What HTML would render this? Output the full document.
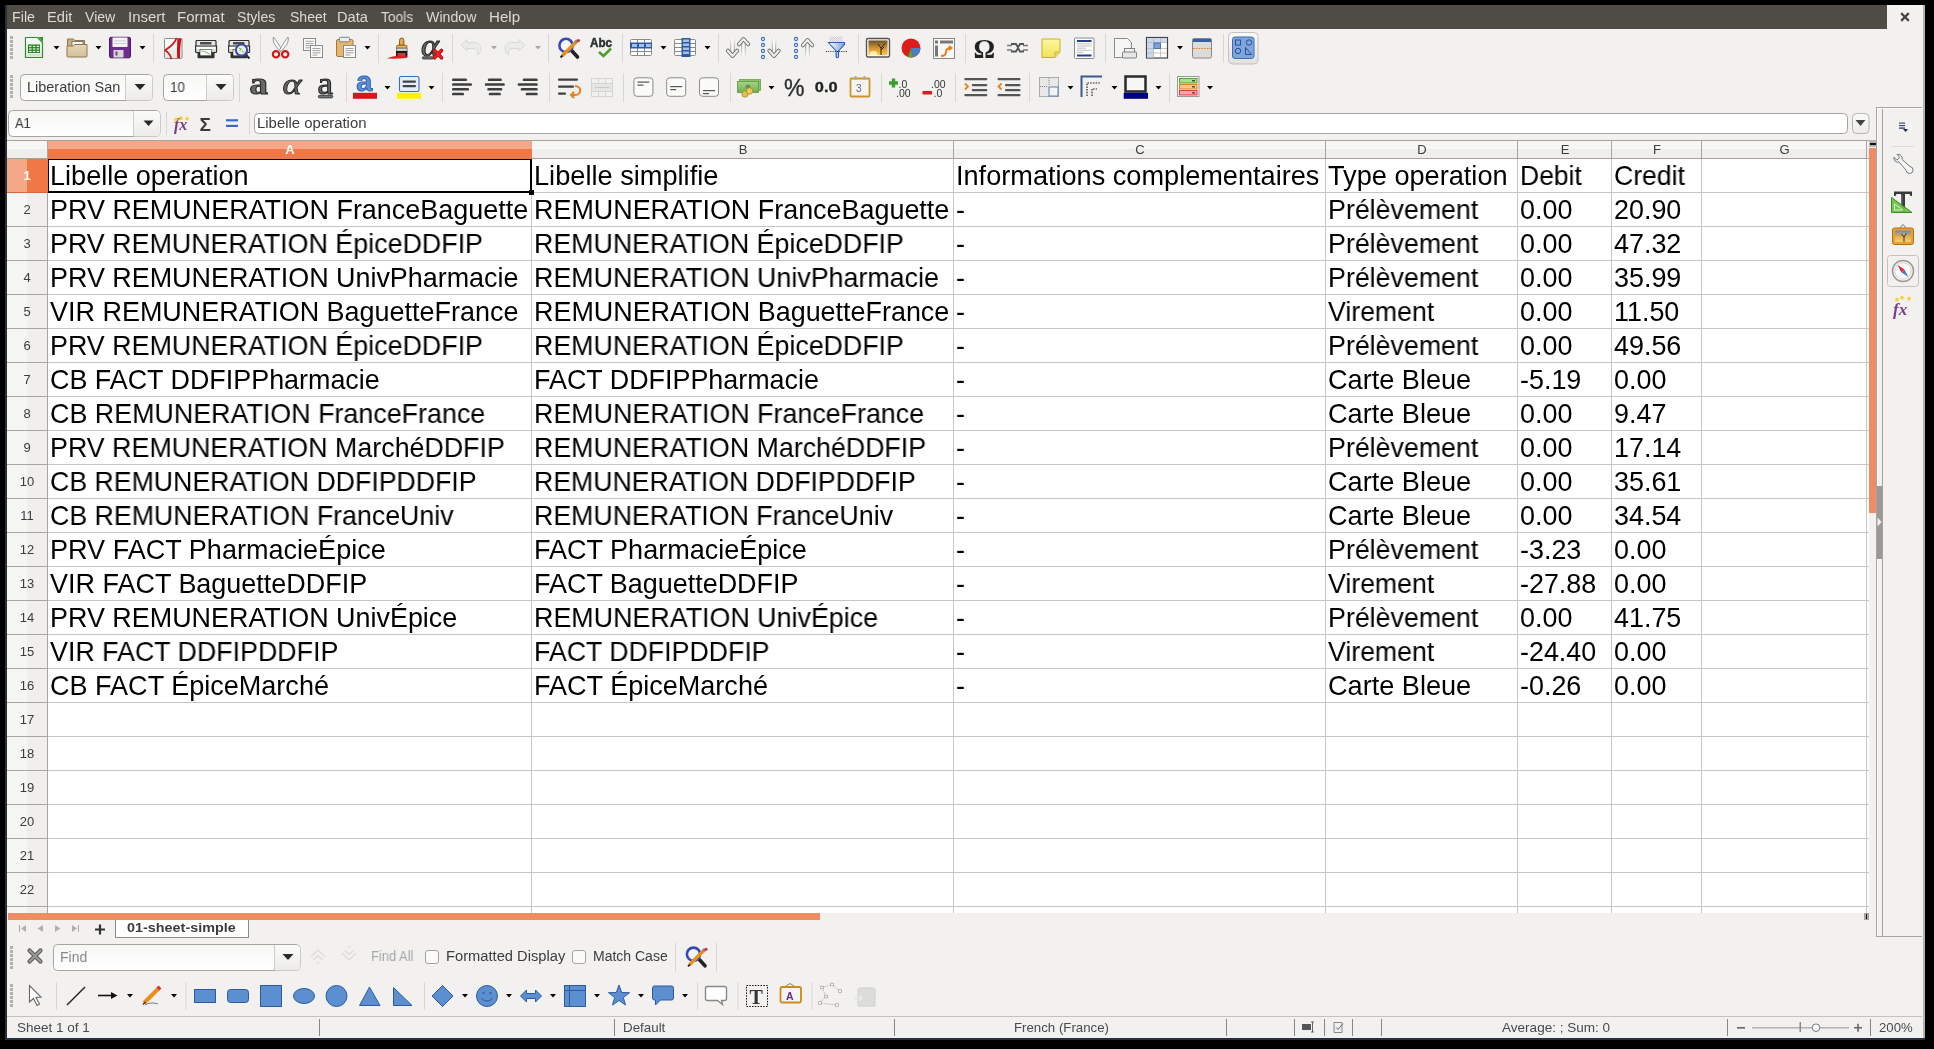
<!DOCTYPE html>
<html><head><meta charset="utf-8"><style>
html,body{margin:0;padding:0;width:1934px;height:1049px;overflow:hidden;background:#000}
body{position:relative;font-family:"Liberation Sans",sans-serif}
body>div,body>svg{position:absolute;box-sizing:border-box}
.t{will-change:transform}
</style></head><body>
<div style="left:0px;top:0px;width:1934px;height:1049px;background:#000"></div><div style="left:5px;top:5px;width:1920px;height:1035px;background:#27303f"></div><div style="left:7px;top:5px;width:1918px;height:1033px;background:#f2f1f0"></div><div style="left:1923px;top:5px;width:2px;height:1033px;background:#b4b2ae"></div><div style="left:7px;top:5px;width:1880px;height:24px;background:#4f4b45"></div><div class="t" style="left:12.28px;top:10.25px;font-size:14px;line-height:14px;color:#dfdbd2;white-space:pre;transform:scaleX(1.0196);transform-origin:left top;">File</div><div class="t" style="left:47.45px;top:10.25px;font-size:14px;line-height:14px;color:#dfdbd2;white-space:pre;transform:scaleX(1.0459);transform-origin:left top;">Edit</div><div class="t" style="left:85.10px;top:10.25px;font-size:14px;line-height:14px;color:#dfdbd2;white-space:pre;transform:scaleX(1.0071);transform-origin:left top;">View</div><div class="t" style="left:128.23px;top:10.25px;font-size:14px;line-height:14px;color:#dfdbd2;white-space:pre;transform:scaleX(1.0696);transform-origin:left top;">Insert</div><div class="t" style="left:177.33px;top:10.25px;font-size:14px;line-height:14px;color:#dfdbd2;white-space:pre;transform:scaleX(1.0748);transform-origin:left top;">Format</div><div class="t" style="left:237.40px;top:10.25px;font-size:14px;line-height:14px;color:#dfdbd2;white-space:pre;transform:scaleX(1.0072);transform-origin:left top;">Styles</div><div class="t" style="left:289.50px;top:10.25px;font-size:14px;line-height:14px;color:#dfdbd2;white-space:pre;transform:scaleX(1.0001);transform-origin:left top;">Sheet</div><div class="t" style="left:337.46px;top:10.25px;font-size:14px;line-height:14px;color:#dfdbd2;white-space:pre;transform:scaleX(1.0422);transform-origin:left top;">Data</div><div class="t" style="left:381.20px;top:10.25px;font-size:14px;line-height:14px;color:#dfdbd2;white-space:pre;transform:scaleX(0.9822);transform-origin:left top;">Tools</div><div class="t" style="left:426.00px;top:10.25px;font-size:14px;line-height:14px;color:#dfdbd2;white-space:pre;transform:scaleX(1.0122);transform-origin:left top;">Window</div><div class="t" style="left:488.92px;top:10.25px;font-size:14px;line-height:14px;color:#dfdbd2;white-space:pre;transform:scaleX(1.0783);transform-origin:left top;">Help</div><svg style="left:1897px;top:9px" width="16" height="16" viewBox="0 0 16 16"><path d="M5 5 L11 11 M11 5 L5 11" stroke="#444" stroke-width="2.3" stroke-linecap="square"/></svg><svg style="left:0;top:0" width="1934" height="1049" viewBox="0 0 1934 1049"><defs>
<linearGradient id="gpage" x1="0" y1="0" x2="0" y2="1"><stop offset="0" stop-color="#fff"/><stop offset="1" stop-color="#e4e4e2"/></linearGradient>
<linearGradient id="gfold" x1="0" y1="0" x2="0" y2="1"><stop offset="0" stop-color="#e6d6b6"/><stop offset="1" stop-color="#d4c09a"/></linearGradient>
<linearGradient id="gbtn" x1="0" y1="0" x2="0" y2="1"><stop offset="0" stop-color="#fbfbfa"/><stop offset="1" stop-color="#ecebe9"/></linearGradient>
<linearGradient id="gbox" x1="0" y1="0" x2="0" y2="1"><stop offset="0" stop-color="#f6f6f5"/><stop offset="1" stop-color="#ffffff"/></linearGradient>
<linearGradient id="gsun" x1="0" y1="0" x2="0" y2="1"><stop offset="0" stop-color="#6b4f2a"/><stop offset="0.6" stop-color="#e0a030"/><stop offset="1" stop-color="#f7c552"/></linearGradient>
<linearGradient id="gprint" x1="0" y1="0" x2="0" y2="1"><stop offset="0" stop-color="#8a8a88"/><stop offset="0.5" stop-color="#e8e8e6"/><stop offset="1" stop-color="#3a3a3a"/></linearGradient>
<linearGradient id="gfunnel" x1="0" y1="0" x2="1" y2="0"><stop offset="0" stop-color="#ffffff"/><stop offset="1" stop-color="#7aa3d6"/></linearGradient>
<linearGradient id="gyel" x1="0" y1="0" x2="0" y2="1"><stop offset="0" stop-color="#fdf6a0"/><stop offset="1" stop-color="#f1e25a"/></linearGradient>
<linearGradient id="gsel" x1="0" y1="0" x2="0" y2="1"><stop offset="0" stop-color="#fbfbfa"/><stop offset="1" stop-color="#e2e1de"/></linearGradient>
<linearGradient id="gcash" x1="0" y1="0" x2="0" y2="1"><stop offset="0" stop-color="#a6d58a"/><stop offset="1" stop-color="#6fae52"/></linearGradient>
<linearGradient id="gsky" x1="0" y1="0" x2="0" y2="1"><stop offset="0" stop-color="#6a8ab8"/><stop offset="0.55" stop-color="#e8b050"/><stop offset="1" stop-color="#f8d070"/></linearGradient></defs><rect x="10" y="36" width="3" height="3" fill="#b3b1ac"/><rect x="10" y="40" width="3" height="3" fill="#b3b1ac"/><rect x="10" y="44" width="3" height="3" fill="#b3b1ac"/><rect x="10" y="48" width="3" height="3" fill="#b3b1ac"/><rect x="10" y="52" width="3" height="3" fill="#b3b1ac"/><rect x="10" y="56" width="3" height="3" fill="#b3b1ac"/><path d="M25.5 37.5 H37.5 L42.5 42.5 V57.5 H25.5 Z" fill="url(#gpage)" stroke="#2f8f26" stroke-width="1.2"/><path d="M38 37 H43 V42 Z" fill="#2a9a22"/><rect x="28" y="44.5" width="12" height="8.5" fill="#1f801b"/><rect x="29.0" y="45.8" width="2.6" height="1.3" fill="#e8f4e4"/><rect x="32.8" y="45.8" width="2.6" height="1.3" fill="#e8f4e4"/><rect x="36.6" y="45.8" width="2.6" height="1.3" fill="#e8f4e4"/><rect x="29.0" y="48.3" width="2.6" height="1.3" fill="#e8f4e4"/><rect x="32.8" y="48.3" width="2.6" height="1.3" fill="#e8f4e4"/><rect x="36.6" y="48.3" width="2.6" height="1.3" fill="#e8f4e4"/><rect x="29.0" y="50.8" width="2.6" height="1.3" fill="#e8f4e4"/><rect x="32.8" y="50.8" width="2.6" height="1.3" fill="#e8f4e4"/><rect x="36.6" y="50.8" width="2.6" height="1.3" fill="#e8f4e4"/><rect x="28" y="54.5" width="12" height="0.8" fill="#c8c8c8"/><path d="M53.5 46 h6 l-3 3.5 z" fill="#000"/><path d="M67.5 39 h6 l1.5 1.5 h9.5 v8 h-17 z" fill="#c4ae84" stroke="#8f7650" stroke-width="1"/><rect x="72" y="41.5" width="11" height="6" fill="#fff" stroke="#666" stroke-width="0.8"/><path d="M67 46 h6 l1.5 -1.5 h12.5 v11.5 a1 1 0 0 1 -1 1 h-18 a1 1 0 0 1 -1 -1 z" fill="url(#gfold)" stroke="#8f7650" stroke-width="1"/><path d="M95.5 46 h6 l-3 3.5 z" fill="#000"/><rect x="109.5" y="37.3" width="21" height="20.5" rx="1.5" fill="#6e2c8e" stroke="#4c1766" stroke-width="1"/><rect x="112.5" y="37.5" width="15" height="9.5" fill="#f4f4f2"/><rect x="114" y="40.5" width="12" height="0.7" fill="#b8c0b0"/><rect x="114" y="43.3" width="12" height="0.7" fill="#b8c0b0"/><rect x="113.5" y="50" width="10" height="7.5" fill="#d8d8d4"/><rect x="115.5" y="51.5" width="2" height="4" fill="#7a3a9a"/><path d="M139.5 46 h6 l-3 3.5 z" fill="#000"/><rect x="153" y="34" width="1" height="29" fill="#d9d7d3"/><rect x="164.5" y="38.5" width="17.5" height="20" rx="0.8" fill="url(#gpage)" stroke="#8a8a8a" stroke-width="1"/><path d="M176.3 38.6 C174.5 43.5 170 47 165.8 49.8 L165.3 50.6 C168.5 52.5 170.2 55 171.3 58.4" fill="none" stroke="#cc1a1a" stroke-width="1.7" stroke-linecap="round"/><path d="M177.4 38.6 L181.6 38.4 C180.6 43 179.9 50 180 58.3 L177.2 58.3 C176.9 51 177 44 177.4 38.6 Z" fill="#cc1414"/><path d="M196.5 40.5 h19 l0.5 1 v5 h-20 v-5 z" fill="#e6e6e4" stroke="#2e2e2e" stroke-width="1.2"/><rect x="200" y="42" width="11.5" height="2.6" rx="0.6" fill="#4a4a4a"/><path d="M195.6 46 h21 v5.5 a1 1 0 0 1 -1 1 h-19 a1 1 0 0 1 -1 -1 z" fill="#d8d8d6" stroke="#2a2a2a" stroke-width="1.1"/><rect x="196.5" y="47" width="19" height="2" fill="#fafafa"/><path d="M197.5 52 h17 v5.2 a1 1 0 0 1 -1 1 h-15 a1 1 0 0 1 -1 -1 z" fill="#333" /><rect x="200" y="49.3" width="11.5" height="6.5" fill="#fbfbfb" stroke="#111" stroke-width="0.5"/><path d="M201.5 51 l3 0.5 l3 1.5 l2.5 1.5" stroke="#8ccc6a" stroke-width="1.2" fill="none"/><path d="M229.5 40.5 h19 l0.5 1 v5 h-20 v-5 z" fill="#e6e6e4" stroke="#2e2e2e" stroke-width="1.2"/><rect x="233" y="42" width="11.5" height="2.6" rx="0.6" fill="#4a4a4a"/><path d="M228.6 46 h21 v5.5 a1 1 0 0 1 -1 1 h-19 a1 1 0 0 1 -1 -1 z" fill="#d8d8d6" stroke="#2a2a2a" stroke-width="1.1"/><rect x="229.5" y="47" width="19" height="2" fill="#fafafa"/><path d="M230.5 52 h17 v5.2 a1 1 0 0 1 -1 1 h-15 a1 1 0 0 1 -1 -1 z" fill="#333" /><rect x="233" y="49.3" width="11.5" height="6.5" fill="#fbfbfb" stroke="#111" stroke-width="0.5"/><path d="M234.5 51 l3 0.5 l3 1.5 l2.5 1.5" stroke="#8ccc6a" stroke-width="1.2" fill="none"/><line x1="245" y1="54" x2="249.5" y2="58.5" stroke="#333" stroke-width="2.2"/><circle cx="241.5" cy="50" r="5.6" fill="#eaf2e6" stroke="#3848b0" stroke-width="2"/><path d="M239 48 l2 1 l-1 2 M242 51 l2 1.5" stroke="#8ccc6a" stroke-width="1.5" fill="none"/><rect x="260" y="34" width="1" height="29" fill="#d9d7d3"/><path d="M273.5 37 C272 42 276 47 280.5 51.5 L282 50 C279 45 276 40 273.5 37 Z" fill="#f8f8f8" stroke="#8a8a8a" stroke-width="0.9"/><path d="M288 37 C289.5 42 285.5 47 281 51.5 L279.5 50 C282.5 45 285.5 40 288 37 Z" fill="#f8f8f8" stroke="#8a8a8a" stroke-width="0.9"/><circle cx="276" cy="54.3" r="3.2" fill="none" stroke="#d01818" stroke-width="2.1"/><circle cx="285.2" cy="54.3" r="3.2" fill="none" stroke="#d01818" stroke-width="2.1"/><rect x="303.5" y="38.5" width="12" height="12" fill="#fafafa" stroke="#8a8a88" stroke-width="1"/><rect x="305.5" y="40.8" width="8" height="0.9" fill="#999"/><rect x="305.5" y="43.0" width="8" height="0.9" fill="#999"/><rect x="305.5" y="45.2" width="8" height="0.9" fill="#999"/><rect x="305.5" y="47.4" width="5" height="0.9" fill="#999"/><rect x="310.5" y="45.5" width="12" height="12" fill="#fafafa" stroke="#8a8a88" stroke-width="1"/><rect x="312.5" y="48.0" width="8" height="0.9" fill="#999"/><rect x="312.5" y="50.2" width="8" height="0.9" fill="#999"/><rect x="312.5" y="52.4" width="8" height="0.9" fill="#999"/><rect x="312.5" y="54.6" width="5" height="0.9" fill="#999"/><rect x="336.5" y="39.5" width="16.5" height="17" rx="1.5" fill="#e6b670" stroke="#a87830" stroke-width="1"/><rect x="339.5" y="37.3" width="10" height="4.5" rx="1" fill="#eee" stroke="#777" stroke-width="0.9"/><rect x="343.5" y="45.5" width="12" height="12" fill="#fafafa" stroke="#8a8a88" stroke-width="1"/><rect x="345.5" y="48.0" width="8" height="0.9" fill="#999"/><rect x="345.5" y="50.2" width="8" height="0.9" fill="#999"/><rect x="345.5" y="52.4" width="8" height="0.9" fill="#999"/><rect x="345.5" y="54.6" width="5" height="0.9" fill="#999"/><path d="M364.5 46 h6 l-3 3.5 z" fill="#000"/><rect x="378" y="34" width="1" height="29" fill="#d9d7d3"/><path d="M399.5 45.2 V40.5 a2.2 2.5 0 0 1 4.4 0 V45.2 z" fill="#e0aa50" stroke="#8a5a10" stroke-width="1"/><rect x="396.5" y="45.3" width="10.5" height="2.9" rx="1.2" fill="#e8b860" stroke="#8a5a10" stroke-width="0.9"/><rect x="396.3" y="48.2" width="10.9" height="2.9" fill="#dcdcd6" stroke="#555" stroke-width="0.6"/><rect x="396" y="51" width="11.4" height="6.3" fill="#1a1a1a"/><path d="M397.5 53 h8 v4 h-8 z" fill="#c83838"/><path d="M387 58.5 C391 56.5 395 56 398 55.5 L407 56.5 L406.5 58 C400 58.6 393 58.8 387 58.5 Z" fill="#e01c1c"/><text x="421" y="55.5" font-family="Liberation Serif" font-style="italic" font-size="31" fill="#6a6a68" stroke="#2a2a2a" stroke-width="1" textLength="18" lengthAdjust="spacingAndGlyphs">α</text><rect x="422.3" y="56.8" width="11" height="2.2" rx="1.1" fill="#777" stroke="#2a2a2a" stroke-width="0.8"/><path d="M434.5 50.5 L441.5 57.8 M441.5 50.5 L434.5 57.8" stroke="#a00" stroke-width="3.6" stroke-linecap="round"/><path d="M434.5 50.5 L441.5 57.8 M441.5 50.5 L434.5 57.8" stroke="#f02020" stroke-width="2.2" stroke-linecap="round"/><rect x="452" y="34" width="1" height="29" fill="#d9d7d3"/><path d="M461 45 L467 39.5 V42.5 H474 C479 42.5 481 45.5 481 49 C481 52.5 479 54.5 477 55 C478.5 53 478 48.5 474 48.5 H467 V51 Z" fill="#ebebea" stroke="#d8d8d6" stroke-width="1"/><path d="M491 46 h6 l-3 3.5 z" fill="#a8a8a6"/><path d="M525 45 L519 39.5 V42.5 H512 C507 42.5 505 45.5 505 49 C505 52.5 507 54.5 509 55 C507.5 53 508 48.5 512 48.5 H519 V51 Z" fill="#ebebea" stroke="#d8d8d6" stroke-width="1"/><path d="M535 46 h6 l-3 3.5 z" fill="#a8a8a6"/><rect x="548" y="34" width="1" height="29" fill="#d9d7d3"/><line x1="572" y1="51" x2="577.5" y2="57" stroke="#222" stroke-width="3.6" stroke-linecap="round"/><circle cx="566" cy="45.4" r="6.6" fill="#f6f6f6" stroke="#3848b8" stroke-width="2.6"/><path d="M562 56 L576 42" stroke="#e8901a" stroke-width="3.4"/><path d="M575.5 42.5 L577.5 40.5" stroke="#888" stroke-width="3.4"/><circle cx="578.5" cy="40.5" r="1.5" fill="#e02828"/><path d="M560.5 57.5 L562.5 55.5" stroke="#222" stroke-width="1.8"/><text x="590" y="47" font-family="Liberation Sans" font-weight="bold" font-size="13" fill="#2a2e30" stroke="#2a2e30" stroke-width="0.5" textLength="22" lengthAdjust="spacingAndGlyphs">Abc</text><path d="M599 52 L603.5 56 L611 48.5" fill="none" stroke="#4ca02a" stroke-width="2.6"/><rect x="622" y="34" width="1" height="29" fill="#d9d7d3"/><rect x="630.5" y="39.5" width="21" height="16" rx="1" fill="#fff" stroke="#8a8a8a" stroke-width="1"/><path d="M637.5 39.5 v16 M644.5 39.5 v16 M630.5 46 h21 M630.5 51.5 h21" stroke="#8a8a8a" stroke-width="1"/><rect x="630" y="42.5" width="22" height="6" fill="#2a5ba8"/><rect x="632" y="44" width="5" height="3" fill="#a8c0e0"/><rect x="639" y="44" width="5" height="3" fill="#a8c0e0"/><rect x="646" y="44" width="5" height="3" fill="#a8c0e0"/><path d="M660.5 46 h6 l-3 3.5 z" fill="#000"/><rect x="674.5" y="39.5" width="21" height="16" rx="1" fill="#fff" stroke="#8a8a8a" stroke-width="1"/><path d="M674.5 43.5 h21 M674.5 47.5 h21 M674.5 51.5 h21" stroke="#8a8a8a" stroke-width="1"/><rect x="681.5" y="38" width="9" height="19" fill="#2a5ba8"/><rect x="683" y="39.5" width="6" height="2.5" fill="#a8c0e0"/><rect x="683" y="43.5" width="6" height="2.5" fill="#a8c0e0"/><rect x="683" y="47.5" width="6" height="2.5" fill="#a8c0e0"/><rect x="683" y="51.5" width="6" height="2.5" fill="#a8c0e0"/><path d="M704.5 46 h6 l-3 3.5 z" fill="#000"/><rect x="718" y="34" width="1" height="29" fill="#d9d7d3"/><linearGradient id="gstemd" x1="0" y1="0" x2="0" y2="1"><stop offset="0" stop-color="#888" stop-opacity="0.1"/><stop offset="1" stop-color="#777" stop-opacity="1"/></linearGradient><linearGradient id="gstemu" x1="0" y1="1" x2="0" y2="0"><stop offset="0" stop-color="#888" stop-opacity="0.1"/><stop offset="1" stop-color="#777" stop-opacity="1"/></linearGradient><rect x="730.3" y="38" width="4.4" height="14.700000000000003" fill="#f8f8f6"/><rect x="730.3" y="38" width="0.9" height="14.700000000000003" fill="url(#gstemd)"/><rect x="733.8" y="38" width="0.9" height="14.700000000000003" fill="url(#gstemd)"/><path d="M727.9 50.7 L732.5 56.0 L737.1 50.7" fill="none" stroke="#6a6a68" stroke-width="4" stroke-linejoin="round" stroke-linecap="round"/><path d="M727.9 50.7 L732.5 56.0 L737.1 50.7" fill="none" stroke="#eeeeec" stroke-width="2.2" stroke-linejoin="round" stroke-linecap="round"/><rect x="741.3" y="42.3" width="4.4" height="14.700000000000003" fill="#f8f8f6"/><rect x="741.3" y="42.3" width="0.9" height="14.700000000000003" fill="url(#gstemu)"/><rect x="744.8" y="42.3" width="0.9" height="14.700000000000003" fill="url(#gstemu)"/><path d="M738.9 44.3 L743.5 39.0 L748.1 44.3" fill="none" stroke="#6a6a68" stroke-width="4" stroke-linejoin="round" stroke-linecap="round"/><path d="M738.9 44.3 L743.5 39.0 L748.1 44.3" fill="none" stroke="#eeeeec" stroke-width="2.2" stroke-linejoin="round" stroke-linecap="round"/><circle cx="763" cy="39.0" r="1.6" fill="none" stroke="#3a6ab8" stroke-width="1.1"/><circle cx="763" cy="45.0" r="1.6" fill="none" stroke="#3a6ab8" stroke-width="1.1"/><circle cx="763" cy="51.0" r="1.6" fill="none" stroke="#3a6ab8" stroke-width="1.1"/><circle cx="763" cy="57.0" r="1.6" fill="none" stroke="#3a6ab8" stroke-width="1.1"/><rect x="771.8" y="38" width="4.4" height="14.700000000000003" fill="#f8f8f6"/><rect x="771.8" y="38" width="0.9" height="14.700000000000003" fill="url(#gstemd)"/><rect x="775.3" y="38" width="0.9" height="14.700000000000003" fill="url(#gstemd)"/><path d="M769.4 50.7 L774 56.0 L778.6 50.7" fill="none" stroke="#6a6a68" stroke-width="4" stroke-linejoin="round" stroke-linecap="round"/><path d="M769.4 50.7 L774 56.0 L778.6 50.7" fill="none" stroke="#eeeeec" stroke-width="2.2" stroke-linejoin="round" stroke-linecap="round"/><circle cx="796" cy="39.0" r="1.6" fill="none" stroke="#3a6ab8" stroke-width="1.1"/><circle cx="796" cy="45.0" r="1.6" fill="none" stroke="#3a6ab8" stroke-width="1.1"/><circle cx="796" cy="51.0" r="1.6" fill="none" stroke="#3a6ab8" stroke-width="1.1"/><circle cx="796" cy="57.0" r="1.6" fill="none" stroke="#3a6ab8" stroke-width="1.1"/><rect x="805.3" y="43.3" width="4.4" height="14.700000000000003" fill="#f8f8f6"/><rect x="805.3" y="43.3" width="0.9" height="14.700000000000003" fill="url(#gstemu)"/><rect x="808.8" y="43.3" width="0.9" height="14.700000000000003" fill="url(#gstemu)"/><path d="M802.9 45.3 L807.5 40.0 L812.1 45.3" fill="none" stroke="#6a6a68" stroke-width="4" stroke-linejoin="round" stroke-linecap="round"/><path d="M802.9 45.3 L807.5 40.0 L812.1 45.3" fill="none" stroke="#eeeeec" stroke-width="2.2" stroke-linejoin="round" stroke-linecap="round"/><pattern id="pchk" width="2" height="2" patternUnits="userSpaceOnUse"><rect width="1" height="1" fill="#bbb"/><rect x="1" y="1" width="1" height="1" fill="#bbb"/></pattern><rect x="829.5" y="36.5" width="13" height="5.5" fill="url(#pchk)" opacity="0.7"/><path d="M828.5 42.5 h16 v2 l-6 6.5 v5.5 a1.2 1.2 0 0 1 -2.4 0 v-5.5 l-6 -6.5 z" fill="url(#gfunnel)" stroke="#2f5fae" stroke-width="1.1"/><path d="M826 51.5 h21.5" stroke="#222" stroke-width="1" stroke-dasharray="1 1.2"/><rect x="858" y="34" width="1" height="29" fill="#d9d7d3"/><rect x="866.5" y="38.5" width="23" height="18.5" rx="1.5" fill="#f8f8f8" stroke="#555" stroke-width="1.4"/><rect x="868.5" y="40.5" width="19" height="14.5" fill="url(#gsun)"/><path d="M881 55 V48 L878 44 M881 48 L885 43.5 M881 50 L884 47" stroke="#222" stroke-width="1" fill="none"/><path d="M869.5 55 a4 4 0 0 1 8 0 z" fill="#fff0b0"/><circle cx="911" cy="48" r="9.5" fill="#dd1c1c"/><path d="M911 48 L920.5 48 A9.5 9.5 0 0 1 913 57.3 Z" fill="#4a7fc8"/><path d="M911 48 L913 57.3 A9.5 9.5 0 0 1 908 57 Z" fill="#4aa83a"/><rect x="933.5" y="38.5" width="21" height="20" fill="#f8f8f8" stroke="#888" stroke-width="1"/><rect x="935" y="40.5" width="3" height="3" fill="#777"/><rect x="940" y="40.5" width="13" height="3" fill="#777"/><rect x="935" y="45.5" width="3" height="11" fill="#777"/><path d="M941 56 C944 56 946 55 946 52 C946 49 948 48 951 48 M949 46 l2.5 2 l-2.5 2" stroke="#e8801a" stroke-width="2" fill="none"/><rect x="965" y="34" width="1" height="29" fill="#d9d7d3"/><text x="973.5" y="58" font-family="Liberation Serif" font-weight="bold" font-size="27" fill="#222">Ω</text><path d="M1007 45.5 h5 M1023 45.5 h5 M1007 50 h5 M1023 50 h5" stroke="#777" stroke-width="1.3"/><path d="M1011 44 h5 l2 3.5 l2 -3.5 h4 M1011 51.5 h5 l2 -3.5 l2 3.5 h4" stroke="#555" stroke-width="1.8" fill="none"/><path d="M1042 39 h18 v13 l-5 5.5 h-13 z" fill="url(#gyel)" stroke="#c8b020" stroke-width="1"/><path d="M1055 57.5 v-5.5 h5" fill="#e8d868" stroke="#c8b020" stroke-width="0.8"/><rect x="1074.5" y="38" width="19.5" height="20.5" rx="1" fill="#fff" stroke="#888" stroke-width="1"/><rect x="1077" y="40" width="14.5" height="2" fill="#1f3f8f"/><rect x="1077" y="54.5" width="14.5" height="2" fill="#1f3f8f"/><rect x="1077" y="43.5" width="14.5" height="0.8" fill="#b0b0b0"/><rect x="1077" y="45.6" width="14.5" height="0.8" fill="#b0b0b0"/><rect x="1077" y="47.7" width="9" height="0.8" fill="#b0b0b0"/><rect x="1077" y="49.8" width="14.5" height="0.8" fill="#b0b0b0"/><rect x="1077" y="51.9" width="6" height="0.8" fill="#b0b0b0"/><rect x="1105" y="34" width="1" height="29" fill="#d9d7d3"/><path d="M1114.5 38.5 h13 l4 4 v15 h-17 z" fill="#f6f6f6" stroke="#8a8a8a" stroke-width="1"/><rect x="1124.5" y="48.5" width="10" height="4" fill="#f0f0f0" stroke="#777" stroke-width="0.9"/><rect x="1122.5" y="52" width="14" height="6" rx="1" fill="#e6e6e6" stroke="#777" stroke-width="0.9"/><rect x="1146.5" y="37.5" width="21" height="20.5" fill="#fff" stroke="#444" stroke-width="1.2"/><rect x="1147" y="38" width="20" height="4.5" fill="#c8d8f0"/><rect x="1147" y="38" width="6.5" height="19.5" fill="#c8d8f0"/><path d="M1147 42.5 h20 M1153.5 38 v19.5 M1160.5 38 v19.5 M1147 48.5 h20 M1147 53 h20" stroke="#b8b8b0" stroke-width="0.8"/><rect x="1154" y="43" width="6.5" height="5.5" fill="#7aa2dc" stroke="#3a64ac" stroke-width="0.8"/><path d="M1177 46 h6 l-3 3.5 z" fill="#000"/><rect x="1192.5" y="38.5" width="19" height="19.5" rx="1.5" fill="#dcdcd8" stroke="#888" stroke-width="1"/><rect x="1193" y="39" width="18" height="3" fill="#2f62a8"/><path d="M1193 48.5 h18" stroke="#f07820" stroke-width="1" stroke-dasharray="1.6 1.2"/><rect x="1223" y="34" width="1" height="29" fill="#d9d7d3"/><rect x="1228.5" y="32.5" width="29.5" height="31.5" rx="4" fill="url(#gsel)" stroke="#c4c2be" stroke-width="1"/><rect x="1232.5" y="37" width="21.5" height="21.5" rx="2.5" fill="#7ea6dc" stroke="#3d6cb4" stroke-width="1"/><rect x="1235.5" y="40" width="5" height="5" fill="none" stroke="#2a4e90" stroke-width="1"/><circle cx="1249" cy="42.5" r="2.7" fill="none" stroke="#2a4e90" stroke-width="1"/><circle cx="1238" cy="51" r="2.7" fill="none" stroke="#2a4e90" stroke-width="1"/><path d="M1245.5 47.5 v7 h6 z" fill="none" stroke="#2a4e90" stroke-width="1"/><rect x="10" y="75" width="3" height="3" fill="#b3b1ac"/><rect x="10" y="79" width="3" height="3" fill="#b3b1ac"/><rect x="10" y="83" width="3" height="3" fill="#b3b1ac"/><rect x="10" y="87" width="3" height="3" fill="#b3b1ac"/><rect x="10" y="91" width="3" height="3" fill="#b3b1ac"/><rect x="10" y="95" width="3" height="3" fill="#b3b1ac"/><rect x="20.5" y="74.5" width="132" height="26" rx="4" fill="url(#gbox)" stroke="#a8a49f" stroke-width="1"/><path d="M125.5 75 v25" stroke="#d0cdc8" stroke-width="1"/><path d="M126 75 h22.5 a4 4 0 0 1 4 4 v17.5 a4 4 0 0 1 -4 4 h-22.5 z" fill="url(#gbtn)"/><path d="M134.5 84 h11 l-5.5 6 z" fill="#2a2a2a"/><rect x="163.5" y="74.5" width="70" height="26" rx="4" fill="url(#gbox)" stroke="#a8a49f" stroke-width="1"/><path d="M206.5 75 v25" stroke="#d0cdc8" stroke-width="1"/><path d="M207 75 h22.5 a4 4 0 0 1 4 4 v17.5 a4 4 0 0 1 -4 4 h-22.5 z" fill="url(#gbtn)"/><path d="M215.5 84 h11 l-5.5 6 z" fill="#2a2a2a"/><rect x="239" y="73" width="1" height="29" fill="#d9d7d3"/><text x="249.5" y="94" font-family="Liberation Serif" font-weight="bold" font-size="31" fill="#6a6a68" stroke="#2a2a2a" stroke-width="1" textLength="18.5" lengthAdjust="spacingAndGlyphs">a</text><text x="282.5" y="94" font-family="Liberation Serif" font-style="italic" font-size="30" fill="#6a6a68" stroke="#2a2a2a" stroke-width="0.9" textLength="19" lengthAdjust="spacingAndGlyphs">α</text><text x="317.5" y="94" font-family="Liberation Serif" font-size="31" fill="#6a6a68" stroke="#2a2a2a" stroke-width="1" textLength="15.5" lengthAdjust="spacingAndGlyphs">a</text><rect x="318.3" y="95.3" width="14.5" height="2.6" rx="1.3" fill="#777" stroke="#2a2a2a" stroke-width="0.8"/><rect x="346" y="73" width="1" height="29" fill="#d9d7d3"/><text x="356.3" y="90.5" font-family="Liberation Sans" font-weight="bold" font-size="27" fill="#5a90dc" stroke="#2a58a8" stroke-width="0.9" textLength="16" lengthAdjust="spacingAndGlyphs">a</text><rect x="353" y="92.8" width="24" height="6" fill="#d8161c"/><path d="M384.5 86 h6 l-3 3.5 z" fill="#000"/><rect x="399.5" y="76.5" width="19.5" height="15" rx="1.5" fill="#e6eefa" stroke="#3a6cc0" stroke-width="1.1"/><rect x="402.5" y="80.5" width="13.5" height="2.2" rx="1" fill="#444"/><rect x="402.5" y="85" width="13.5" height="2.2" rx="1" fill="#444"/><rect x="397" y="92.8" width="24" height="6" fill="#fff200"/><path d="M428.5 86 h6 l-3 3.5 z" fill="#000"/><rect x="442" y="73" width="1" height="29" fill="#d9d7d3"/><rect x="452" y="78.50" width="15" height="2.6" rx="1.2" fill="#3e3e3e"/><rect x="452" y="83.25" width="20" height="2.6" rx="1.2" fill="#3e3e3e"/><rect x="452" y="88.00" width="17" height="2.6" rx="1.2" fill="#3e3e3e"/><rect x="452" y="92.75" width="12" height="2.6" rx="1.2" fill="#3e3e3e"/><rect x="487.8" y="78.50" width="14" height="2.6" rx="1.2" fill="#3e3e3e"/><rect x="484.8" y="83.25" width="20" height="2.6" rx="1.2" fill="#3e3e3e"/><rect x="487.3" y="88.00" width="15" height="2.6" rx="1.2" fill="#3e3e3e"/><rect x="488.8" y="92.75" width="12" height="2.6" rx="1.2" fill="#3e3e3e"/><rect x="522.7" y="78.50" width="15" height="2.6" rx="1.2" fill="#3e3e3e"/><rect x="517.7" y="83.25" width="20" height="2.6" rx="1.2" fill="#3e3e3e"/><rect x="520.7" y="88.00" width="17" height="2.6" rx="1.2" fill="#3e3e3e"/><rect x="525.7" y="92.75" width="12" height="2.6" rx="1.2" fill="#3e3e3e"/><rect x="549" y="73" width="1" height="29" fill="#d9d7d3"/><rect x="558" y="78.5" width="20" height="2.2" rx="1" fill="#3e3e3e"/><rect x="558" y="85.5" width="16" height="2.2" rx="1" fill="#3e3e3e"/><rect x="558" y="92.5" width="8" height="2.2" rx="1" fill="#3e3e3e"/><path d="M575 86 C582 86 582 95 575 95 h-3 M574 92 l-3 3 l3 3" stroke="#e8801a" stroke-width="2" fill="none"/><rect x="591.5" y="78.5" width="21" height="18" fill="#f2f2f0" stroke="#d4d4d2" stroke-width="1"/><path d="M598.5 78.5 v18 M605.5 78.5 v18 M591.5 83.5 h21 M591.5 91.5 h21" stroke="#d4d4d2" stroke-width="1"/><rect x="592" y="84" width="20" height="7" fill="#e6e6e4"/><path d="M595 87.5 h14" stroke="#c8c8c6" stroke-width="1"/><rect x="623" y="73" width="1" height="29" fill="#d9d7d3"/><rect x="633.9" y="77.8" width="19" height="18.5" rx="3" fill="#fbfbfa" stroke="#8a8a88" stroke-width="1"/><rect x="637.4" y="81.5" width="12" height="1.2" fill="#555"/><rect x="637.4" y="84.5" width="6" height="1.2" fill="#555"/><rect x="666.7" y="77.8" width="19" height="18.5" rx="3" fill="#fbfbfa" stroke="#8a8a88" stroke-width="1"/><rect x="670.2" y="86" width="12" height="1.2" fill="#555"/><rect x="670.2" y="89" width="6" height="1.2" fill="#555"/><rect x="699.5" y="77.8" width="19" height="18.5" rx="3" fill="#fbfbfa" stroke="#8a8a88" stroke-width="1"/><rect x="703" y="90" width="12" height="1.2" fill="#555"/><rect x="703" y="93" width="6" height="1.2" fill="#555"/><rect x="730" y="73" width="1" height="29" fill="#d9d7d3"/><rect x="739.5" y="79.5" width="21" height="11" fill="#8cc46e" stroke="#6aa04a" stroke-width="0.8"/><rect x="737.5" y="81.5" width="21" height="11" fill="url(#gcash)" stroke="#5a9a3a" stroke-width="0.8"/><circle cx="748" cy="87" r="2.5" fill="#5e9a44"/><circle cx="745" cy="94" r="3.2" fill="#e0c050" stroke="#a88a20" stroke-width="0.8"/><circle cx="749.5" cy="91" r="3.2" fill="#e8cc5a" stroke="#a88a20" stroke-width="0.8"/><path d="M768.5 86 h6 l-3 3.5 z" fill="#000"/><text x="784" y="96" font-family="Liberation Sans" font-size="23.5" fill="#2e2e2e" stroke="#2e2e2e" stroke-width="0.35" textLength="20.5" lengthAdjust="spacingAndGlyphs">%</text><text x="814.8" y="92" font-family="Liberation Sans" font-weight="bold" font-size="15.5" fill="#222" stroke="#222" stroke-width="0.3" textLength="22.8" lengthAdjust="spacingAndGlyphs">0.0</text><rect x="850.5" y="78.5" width="19" height="18" rx="1" fill="#f4f4f2" stroke="#d0922a" stroke-width="1.8"/><rect x="854.5" y="76" width="2" height="4" fill="#aaa"/><rect x="863.5" y="76" width="2" height="4" fill="#aaa"/><text x="856" y="92" font-family="Liberation Sans" font-size="10" fill="#666">3</text><rect x="881" y="73" width="1" height="29" fill="#d9d7d3"/><path d="M889 83 h9 M893.5 78.5 v9" stroke="#3aa02a" stroke-width="3.4"/><text x="898.5" y="88" font-family="Liberation Sans" font-size="10.5" fill="#333">.0</text><text x="896" y="97" font-family="Liberation Sans" font-size="10.5" fill="#333">.00</text><text x="931" y="88" font-family="Liberation Sans" font-size="10.5" fill="#333">.00</text><rect x="922.5" y="91" width="9.5" height="3.5" fill="#d81c1c"/><text x="933.5" y="97" font-family="Liberation Sans" font-size="10.5" fill="#333">.0</text><rect x="955" y="73" width="1" height="29" fill="#d9d7d3"/><rect x="964.3" y="78" width="23" height="2.2" rx="1" fill="#555"/><rect x="971.8" y="84" width="15.5" height="2.2" rx="1" fill="#555"/><rect x="971.8" y="89" width="15.5" height="2.2" rx="1" fill="#555"/><rect x="964.3" y="94" width="23" height="2.2" rx="1" fill="#555"/><rect x="997.5" y="78" width="23" height="2.2" rx="1" fill="#555"/><rect x="1005" y="84" width="15.5" height="2.2" rx="1" fill="#555"/><rect x="1005" y="89" width="15.5" height="2.2" rx="1" fill="#555"/><rect x="997.5" y="94" width="23" height="2.2" rx="1" fill="#555"/><path d="M965 83.5 l3 3 l-3 3" stroke="#e8801a" stroke-width="1.8" fill="none"/><path d="M1001.5 83.5 l-3 3 l3 3" stroke="#e8801a" stroke-width="1.8" fill="none"/><rect x="1029" y="73" width="1" height="29" fill="#d9d7d3"/><rect x="1039.5" y="77.5" width="19" height="19" fill="#e8e8e6" stroke="#aaa" stroke-width="1"/><path d="M1049 78 v8 M1040 86.5 h8" stroke="#666" stroke-width="0.8" stroke-dasharray="1 1"/><rect x="1049" y="87" width="9" height="9" fill="#f4f4f4" stroke="#5a80b8" stroke-width="1"/><path d="M1067.5 86 h6 l-3 3.5 z" fill="#000"/><path d="M1081.5 97 V76.5 H1102" stroke="#3a5a8a" stroke-width="2" fill="none"/><path d="M1087 96 V83 H1101 M1092 96 V89 H1097" stroke="#222" stroke-width="1.2" fill="none" stroke-dasharray="1.5 1.2"/><path d="M1111.5 86 h6 l-3 3.5 z" fill="#000"/><rect x="1125.5" y="76.5" width="20" height="15" fill="#f6f6f6" stroke="#2a2a2a" stroke-width="2.5"/><rect x="1123.7" y="92.8" width="24.3" height="6" fill="#000080"/><path d="M1155.5 86 h6 l-3 3.5 z" fill="#000"/><rect x="1169" y="73" width="1" height="29" fill="#d9d7d3"/><rect x="1177.5" y="76.5" width="21.5" height="20" fill="#f6f6f6" stroke="#999" stroke-width="1"/><rect x="1179.5" y="78.5" width="17.5" height="4.5" fill="#a6e08a" stroke="#4aa02a" stroke-width="0.9"/><rect x="1192" y="80.2" width="3" height="1.2" fill="#333"/><rect x="1179.5" y="84.5" width="17.5" height="4.5" fill="#f8c888" stroke="#e07a1a" stroke-width="0.9"/><rect x="1192" y="86.2" width="3" height="1.2" fill="#333"/><rect x="1179.5" y="90.5" width="17.5" height="4.5" fill="#f8a8a8" stroke="#d83030" stroke-width="0.9"/><rect x="1192" y="92.2" width="3" height="1.2" fill="#333"/><path d="M1207 86 h6 l-3 3.5 z" fill="#000"/><rect x="8.5" y="110.5" width="151.5" height="26" rx="4" fill="url(#gbox)" stroke="#a8a49f" stroke-width="1"/><path d="M133.5 111 v25" stroke="#d0cdc8" stroke-width="1"/><path d="M134 111 h22 a4 4 0 0 1 4 4 v17.5 a4 4 0 0 1 -4 4 h-22 z" fill="url(#gbtn)"/><path d="M143.5 120.5 h10 l-5 5.5 z" fill="#2a2a2a"/><rect x="166" y="112" width="1" height="23" fill="#d9d7d3"/><text x="174" y="130" font-family="Liberation Serif" font-style="italic" font-weight="bold" font-size="16" fill="#7a3a8a">fx</text><path d="M176 117 l0.8 1.6 l1.7 0.3 l-1.2 1.2 l0.3 1.7 l-1.6 -0.8 l-1.6 0.8 l0.3 -1.7 l-1.2 -1.2 l1.7 -0.3 z" fill="#f4d030"/><path d="M181 115.5 l0.8 1.6 l1.7 0.3 l-1.2 1.2 l0.3 1.7 l-1.6 -0.8 l-1.6 0.8 l0.3 -1.7 l-1.2 -1.2 l1.7 -0.3 z" fill="#f4d030"/><path d="M187 116 l0.8 1.6 l1.7 0.3 l-1.2 1.2 l0.3 1.7 l-1.6 -0.8 l-1.6 0.8 l0.3 -1.7 l-1.2 -1.2 l1.7 -0.3 z" fill="#f4d030"/><text x="199.5" y="131" font-family="Liberation Sans" font-weight="bold" font-size="19" fill="#3a3a3a">Σ</text><rect x="226" y="119.2" width="12" height="2.2" fill="#3a6cc0"/><rect x="226" y="124.8" width="12" height="2.2" fill="#3a6cc0"/><rect x="249" y="112" width="1" height="23" fill="#d9d7d3"/><rect x="254.5" y="113.5" width="1593" height="20" rx="4" fill="#fff" stroke="#a8a49f" stroke-width="1"/><rect x="1852.5" y="113.5" width="16.5" height="20" rx="4" fill="url(#gbtn)" stroke="#b8b4af" stroke-width="1"/><path d="M1855.5 120 h10 l-5 6 z" fill="#444"/><rect x="1899" y="122.5" width="6" height="1.2" fill="#3c4f7c"/><rect x="1899" y="125" width="6" height="1.2" fill="#3c4f7c"/><rect x="1899" y="127.5" width="6" height="1.2" fill="#1c2a4c"/><path d="M1903 129 h5 l-2.5 3 z" fill="#1c2a4c"/><rect x="1892" y="146" width="22" height="1" fill="#dcdad6"/><path d="M1894 157 a4 4 0 0 0 5 5 l7 8 a3.5 3.5 0 1 0 4 -3.5 l-8 -7 a4 4 0 0 0 -5 -5 l2.5 2.5 l-1 2 l-2 1 z" fill="#f8f8f8" stroke="#777" stroke-width="1"/><path d="M1894 191.5 h18 v4.5 h-1.5 l-1 -2 h-4.5 v17 l1.5 1 v1 h-7 v-1 l1.5 -1 v-17 h-4.5 l-1 2 h-1.5 z" fill="#3a3a3a"/><rect x="1901" y="195" width="1.5" height="16" fill="#666"/><path d="M1891.5 212.5 L1912 212.5 L1891.5 197.5 Z" fill="#6cc04a" fill-opacity="0.92" stroke="#3a8a1a" stroke-width="1"/><path d="M1894.5 210 L1903 210 L1894.5 204 Z" fill="none" stroke="#e8f8e0" stroke-width="0.8"/><path d="M1899.5 228.5 l3.5 -4 l3.5 4" fill="none" stroke="#666" stroke-width="0.9"/><rect x="1892.5" y="228" width="21" height="16.5" rx="2" fill="#e8a030" stroke="#b07010" stroke-width="1"/><rect x="1895" y="230.5" width="16" height="11.5" fill="url(#gsky)"/><path d="M1904 242 v-5 l-2.5 -3 M1904 237 l2.5 -3.5" stroke="#222" stroke-width="0.9" fill="none"/><rect x="1887.5" y="255.5" width="31" height="31" rx="3" fill="#f2f1f0" stroke="#c4c2be" stroke-width="1"/><circle cx="1903" cy="271" r="10.5" fill="#f4f4f4" stroke="#999" stroke-width="1.5"/><circle cx="1903" cy="271" r="8.2" fill="#fbfbfb" stroke="#c8c8c8" stroke-width="0.8"/><path d="M1897.5 265 L1904.5 269.5 L1901.5 272.5 Z" fill="#e02828"/><path d="M1908.5 277 L1901.5 272.5 L1904.5 269.5 Z" fill="#4a7ad0"/><text x="1893" y="315" font-family="Liberation Serif" font-style="italic" font-weight="bold" font-size="17" fill="#7a3a8a">fx</text><path d="M1897 297 l0.8 1.6 l1.7 0.3 l-1.2 1.2 l0.3 1.7 l-1.6 -0.8 l-1.6 0.8 l0.3 -1.7 l-1.2 -1.2 l1.7 -0.3 z" fill="#f4d030"/><path d="M1902 295 l0.8 1.6 l1.7 0.3 l-1.2 1.2 l0.3 1.7 l-1.6 -0.8 l-1.6 0.8 l0.3 -1.7 l-1.2 -1.2 l1.7 -0.3 z" fill="#f4d030"/><path d="M1909 296 l0.8 1.6 l1.7 0.3 l-1.2 1.2 l0.3 1.7 l-1.6 -0.8 l-1.6 0.8 l0.3 -1.7 l-1.2 -1.2 l1.7 -0.3 z" fill="#f4d030"/><rect x="19" y="925" width="1" height="7" fill="#aaa"/><path d="M26 925 v7 l-5 -3.5 z" fill="#b0b0b0"/><path d="M43 925 v7 l-5.5 -3.5 z" fill="#b0b0b0"/><path d="M55 925 v7 l5.5 -3.5 z" fill="#b0b0b0"/><path d="M72 925 v7 l5 -3.5 z" fill="#b0b0b0"/><rect x="78" y="925" width="1" height="7" fill="#aaa"/><path d="M95 929.5 h10 M100 924.5 v10" stroke="#333" stroke-width="2.2"/><rect x="10" y="946" width="3" height="3" fill="#b3b1ac"/><rect x="10" y="950" width="3" height="3" fill="#b3b1ac"/><rect x="10" y="954" width="3" height="3" fill="#b3b1ac"/><rect x="10" y="958" width="3" height="3" fill="#b3b1ac"/><rect x="10" y="962" width="3" height="3" fill="#b3b1ac"/><rect x="10" y="966" width="3" height="3" fill="#b3b1ac"/><path d="M29.5 950.5 L40.5 961.5 M40.5 950.5 L29.5 961.5" stroke="#555" stroke-width="4.2" stroke-linecap="round"/><path d="M29.5 950.5 L40.5 961.5 M40.5 950.5 L29.5 961.5" stroke="#9a9a98" stroke-width="2.4" stroke-linecap="round"/><rect x="53.5" y="944.5" width="246.5" height="26" rx="4" fill="url(#gbox)" stroke="#a8a49f" stroke-width="1"/><path d="M274.5 945 v25" stroke="#d0cdc8" stroke-width="1"/><path d="M275 945 h21 a4 4 0 0 1 4 4 v17.5 a4 4 0 0 1 -4 4 h-21 z" fill="url(#gbtn)"/><path d="M282.5 954 h11 l-5.5 6 z" fill="#2a2a2a"/><path d="M311 957 l7 -7 l7 7 M313.5 960 l4.5 -4.5 l4.5 4.5" fill="none" stroke="#dcdcda" stroke-width="1.4"/><circle cx="318" cy="963" r="1" fill="none" stroke="#dcdcda"/><path d="M342 953 l7 7 l7 -7 M344.5 950 l4.5 4.5 l4.5 -4.5" fill="none" stroke="#dcdcda" stroke-width="1.4"/><circle cx="349" cy="947" r="1" fill="none" stroke="#dcdcda"/><rect x="425.5" y="950.5" width="13" height="13" rx="2.5" fill="#fbfbfa" stroke="#a6a29c" stroke-width="1"/><rect x="572.5" y="950.5" width="13" height="13" rx="2.5" fill="#fbfbfa" stroke="#a6a29c" stroke-width="1"/><rect x="675" y="943" width="1" height="29" fill="#d9d7d3"/><line x1="699.5" y1="959.8" x2="705.0" y2="965.8" stroke="#222" stroke-width="3.6" stroke-linecap="round"/><circle cx="693.5" cy="954.1999999999999" r="6.6" fill="#f6f6f6" stroke="#3848b8" stroke-width="2.6"/><path d="M689.5 964.8 L703.5 950.8" stroke="#e8901a" stroke-width="3.4"/><path d="M703.0 951.3 L705.0 949.3" stroke="#888" stroke-width="3.4"/><circle cx="706.0" cy="949.3" r="1.5" fill="#e02828"/><path d="M688.0 966.3 L690.0 964.3" stroke="#222" stroke-width="1.8"/><rect x="716" y="943" width="1" height="29" fill="#d9d7d3"/><rect x="10" y="984" width="3" height="3" fill="#b3b1ac"/><rect x="10" y="988" width="3" height="3" fill="#b3b1ac"/><rect x="10" y="992" width="3" height="3" fill="#b3b1ac"/><rect x="10" y="996" width="3" height="3" fill="#b3b1ac"/><rect x="10" y="1000" width="3" height="3" fill="#b3b1ac"/><rect x="10" y="1004" width="3" height="3" fill="#b3b1ac"/><path d="M29.5 985.5 V1002 L33.5 998.5 L37 1005.5 L39.5 1004 L36 997.5 L41 997 Z" fill="#fff" stroke="#666" stroke-width="1.1"/><rect x="56" y="982" width="1" height="28" fill="#d9d7d3"/><path d="M67 1005 L85 987" stroke="#222" stroke-width="1.4"/><path d="M98 995.5 H113" stroke="#111" stroke-width="1.6"/><path d="M111 992 L117.5 995.5 L111 999 Z" fill="#111"/><path d="M127 994 h6 l-3 3.5 z" fill="#000"/><path d="M144 1003 L158.5 988.5" stroke="#e8901a" stroke-width="4"/><path d="M158 989 L160 987" stroke="#e03030" stroke-width="4"/><path d="M143 1004.5 L145.5 1002" stroke="#333" stroke-width="1.5"/><path d="M145 1005 C150 1002 155 1003 158 1004" stroke="#555" stroke-width="0.8" fill="none"/><path d="M171 994 h6 l-3 3.5 z" fill="#000"/><rect x="185.5" y="982" width="1" height="28" fill="#d9d7d3"/><rect x="194.5" y="989.5" width="21" height="13" fill="#5b8fd0" stroke="#2c5aa0" stroke-width="1"/><rect x="227.5" y="989.5" width="21" height="13" rx="3" fill="#5b8fd0" stroke="#2c5aa0" stroke-width="1"/><rect x="260.5" y="985.5" width="21" height="21" fill="#5b8fd0" stroke="#2c5aa0" stroke-width="1"/><ellipse cx="304" cy="996" rx="10.5" ry="7.5" fill="#5b8fd0" stroke="#2c5aa0" stroke-width="1"/><circle cx="336.5" cy="996" r="10.5" fill="#5b8fd0" stroke="#2c5aa0" stroke-width="1"/><path d="M359.5 1005.5 L369.5 987 L380 1005.5 Z" fill="#5b8fd0" stroke="#2c5aa0" stroke-width="1"/><path d="M393.5 987.5 V1005.5 H412 Z" fill="#5b8fd0" stroke="#2c5aa0" stroke-width="1"/><rect x="424" y="982" width="1" height="28" fill="#d9d7d3"/><path d="M432 996 L442.5 985.5 L453 996 L442.5 1006.5 Z" fill="#5b8fd0" stroke="#2c5aa0" stroke-width="1"/><path d="M462 994 h6 l-3 3.5 z" fill="#000"/><circle cx="487" cy="996" r="10.5" fill="#5b8fd0" stroke="#2c5aa0" stroke-width="1"/><circle cx="483.5" cy="993" r="1.1" fill="#2c5aa0"/><circle cx="490.5" cy="993" r="1.1" fill="#2c5aa0"/><path d="M481.5 998 C484 1002 490 1002 492.5 998" stroke="#2c5aa0" stroke-width="1" fill="none"/><path d="M506 994 h6 l-3 3.5 z" fill="#000"/><path d="M520.5 996 L526.5 990 V993.5 H535.5 V990 L541.5 996 L535.5 1002 V998.5 H526.5 V1002 Z" fill="#5b8fd0" stroke="#2c5aa0" stroke-width="1"/><path d="M550 994 h6 l-3 3.5 z" fill="#000"/><rect x="564.5" y="985.5" width="21" height="21" fill="#5b8fd0" stroke="#2c5aa0" stroke-width="1"/><path d="M564.5 990.5 H585.5 M569.5 985.5 V1006.5" stroke="#2c5aa0" stroke-width="1"/><path d="M594 994 h6 l-3 3.5 z" fill="#000"/><path d="M619 985 L621.7 992.5 L629.5 992.7 L623.3 997.5 L625.5 1005 L619 1000.5 L612.5 1005 L614.7 997.5 L608.5 992.7 L616.3 992.5 Z" fill="#5b8fd0" stroke="#2c5aa0" stroke-width="1"/><path d="M638 994 h6 l-3 3.5 z" fill="#000"/><path d="M652.5 988 a2 2 0 0 1 2 -2 h17 a2 2 0 0 1 2 2 v10 a2 2 0 0 1 -2 2 h-11 l-5 5 v-5 h-1 a2 2 0 0 1 -2 -2 z" fill="#5b8fd0" stroke="#2c5aa0" stroke-width="1"/><path d="M682 994 h6 l-3 3.5 z" fill="#000"/><rect x="697" y="982" width="1" height="28" fill="#d9d7d3"/><path d="M705.5 988.5 a2 2 0 0 1 2 -2 h17 a2 2 0 0 1 2 2 v10 a2 2 0 0 1 -2 2 h-3 l1 4 l-5 -4 h-10 a2 2 0 0 1 -2 -2 z" fill="#fff" stroke="#888" stroke-width="1.4"/><rect x="737.5" y="982" width="1" height="28" fill="#d9d7d3"/><rect x="746.5" y="985.5" width="21" height="21" fill="none" stroke="#111" stroke-width="1" stroke-dasharray="1.5 1.3"/><text x="749.5" y="1004" font-family="Liberation Serif" font-weight="bold" font-size="20" fill="#333">T</text><path d="M786 986 l4 -2.5 l4 2.5" fill="none" stroke="#666" stroke-width="0.8"/><rect x="780.5" y="987" width="20.5" height="15.5" rx="1.5" fill="#f4f4f4" stroke="#d08a1a" stroke-width="1.8"/><text x="786" y="1000" font-family="Liberation Sans" font-weight="bold" font-size="10.5" fill="#6a2a8a">A</text><rect x="811.5" y="982" width="1" height="28" fill="#d9d7d3"/><path d="M822 987.5 L832 984.5 L840 991 M822 987.5 L826 996.5 L820 1003 L837 1005" fill="none" stroke="#aaa" stroke-width="0.8" stroke-dasharray="1.5 1"/><rect x="820.7" y="986.2" width="2.6" height="2.6" fill="#fff" stroke="#999" stroke-width="0.7"/><rect x="830.7" y="983.2" width="2.6" height="2.6" fill="#fff" stroke="#999" stroke-width="0.7"/><rect x="838.7" y="989.7" width="2.6" height="2.6" fill="#fff" stroke="#999" stroke-width="0.7"/><rect x="824.7" y="995.2" width="2.6" height="2.6" fill="#fff" stroke="#999" stroke-width="0.7"/><rect x="818.7" y="1001.7" width="2.6" height="2.6" fill="#fff" stroke="#999" stroke-width="0.7"/><rect x="835.7" y="1003.7" width="2.6" height="2.6" fill="#fff" stroke="#999" stroke-width="0.7"/><path d="M858 990 a2 2 0 0 1 2 -2 h13 a2 2 0 0 1 2 2 v16 h-17 z" fill="#dcdcda" stroke="#d0d0ce" stroke-width="1"/><path d="M854 998 h8 M859 995 l3 3 l-3 3" stroke="#e6e6e4" stroke-width="2" fill="none"/><rect x="319" y="1019" width="1" height="17" fill="#8a8782"/><rect x="614" y="1019" width="1" height="17" fill="#8a8782"/><rect x="894" y="1019" width="1" height="17" fill="#8a8782"/><rect x="1226" y="1019" width="1" height="17" fill="#8a8782"/><rect x="1294" y="1019" width="1" height="17" fill="#8a8782"/><rect x="1324" y="1019" width="1" height="17" fill="#8a8782"/><rect x="1352" y="1019" width="1" height="17" fill="#8a8782"/><rect x="1381" y="1019" width="1" height="17" fill="#8a8782"/><rect x="1727" y="1019" width="1" height="17" fill="#8a8782"/><rect x="1870" y="1019" width="1" height="17" fill="#8a8782"/><rect x="1302" y="1024" width="9" height="6" fill="#555"/><path d="M1312.5 1022 v10 M1311 1022 h3 M1311 1032 h3" stroke="#555" stroke-width="0.9"/><path d="M1334 1022.5 h8 v10 h-8 z" fill="none" stroke="#888" stroke-width="1"/><path d="M1336 1027.5 l2 2 l5 -6" stroke="#666" stroke-width="1" fill="none"/><rect x="1737" y="1027" width="8" height="1.6" fill="#666"/><rect x="1752" y="1027" width="97" height="1.5" fill="#b4b2ae"/><rect x="1799.5" y="1022" width="1.5" height="10" fill="#888"/><circle cx="1816" cy="1027.7" r="3.8" fill="#fafafa" stroke="#777" stroke-width="1"/><path d="M1854 1027.7 h8 M1858 1023.7 v8" stroke="#666" stroke-width="1.6"/></svg><div style="left:48px;top:159px;width:1821px;height:754px;background:#fff"></div><div style="left:7px;top:140px;width:1862px;height:19px;background:linear-gradient(#f6f6f5 0,#f6f6f5 9px,#efeeec 9px)"></div><div style="left:7px;top:140px;width:1862px;height:1px;background:#a6a29c"></div><div style="left:7px;top:158px;width:1862px;height:1px;background:#a6a29c"></div><div style="left:7px;top:159px;width:41px;height:754px;background:linear-gradient(90deg,#f6f6f5 0,#f6f6f5 20px,#f0efed 20px)"></div><div style="left:48px;top:192px;width:1821px;height:1px;background:#c6c6c6"></div><div style="left:7px;top:192px;width:40px;height:1px;background:#aaa69f"></div><div style="left:48px;top:226px;width:1821px;height:1px;background:#c6c6c6"></div><div style="left:7px;top:226px;width:40px;height:1px;background:#aaa69f"></div><div style="left:48px;top:260px;width:1821px;height:1px;background:#c6c6c6"></div><div style="left:7px;top:260px;width:40px;height:1px;background:#aaa69f"></div><div style="left:48px;top:294px;width:1821px;height:1px;background:#c6c6c6"></div><div style="left:7px;top:294px;width:40px;height:1px;background:#aaa69f"></div><div style="left:48px;top:328px;width:1821px;height:1px;background:#c6c6c6"></div><div style="left:7px;top:328px;width:40px;height:1px;background:#aaa69f"></div><div style="left:48px;top:362px;width:1821px;height:1px;background:#c6c6c6"></div><div style="left:7px;top:362px;width:40px;height:1px;background:#aaa69f"></div><div style="left:48px;top:396px;width:1821px;height:1px;background:#c6c6c6"></div><div style="left:7px;top:396px;width:40px;height:1px;background:#aaa69f"></div><div style="left:48px;top:430px;width:1821px;height:1px;background:#c6c6c6"></div><div style="left:7px;top:430px;width:40px;height:1px;background:#aaa69f"></div><div style="left:48px;top:464px;width:1821px;height:1px;background:#c6c6c6"></div><div style="left:7px;top:464px;width:40px;height:1px;background:#aaa69f"></div><div style="left:48px;top:498px;width:1821px;height:1px;background:#c6c6c6"></div><div style="left:7px;top:498px;width:40px;height:1px;background:#aaa69f"></div><div style="left:48px;top:532px;width:1821px;height:1px;background:#c6c6c6"></div><div style="left:7px;top:532px;width:40px;height:1px;background:#aaa69f"></div><div style="left:48px;top:566px;width:1821px;height:1px;background:#c6c6c6"></div><div style="left:7px;top:566px;width:40px;height:1px;background:#aaa69f"></div><div style="left:48px;top:600px;width:1821px;height:1px;background:#c6c6c6"></div><div style="left:7px;top:600px;width:40px;height:1px;background:#aaa69f"></div><div style="left:48px;top:634px;width:1821px;height:1px;background:#c6c6c6"></div><div style="left:7px;top:634px;width:40px;height:1px;background:#aaa69f"></div><div style="left:48px;top:668px;width:1821px;height:1px;background:#c6c6c6"></div><div style="left:7px;top:668px;width:40px;height:1px;background:#aaa69f"></div><div style="left:48px;top:702px;width:1821px;height:1px;background:#c6c6c6"></div><div style="left:7px;top:702px;width:40px;height:1px;background:#aaa69f"></div><div style="left:48px;top:736px;width:1821px;height:1px;background:#c6c6c6"></div><div style="left:7px;top:736px;width:40px;height:1px;background:#aaa69f"></div><div style="left:48px;top:770px;width:1821px;height:1px;background:#c6c6c6"></div><div style="left:7px;top:770px;width:40px;height:1px;background:#aaa69f"></div><div style="left:48px;top:804px;width:1821px;height:1px;background:#c6c6c6"></div><div style="left:7px;top:804px;width:40px;height:1px;background:#aaa69f"></div><div style="left:48px;top:838px;width:1821px;height:1px;background:#c6c6c6"></div><div style="left:7px;top:838px;width:40px;height:1px;background:#aaa69f"></div><div style="left:48px;top:872px;width:1821px;height:1px;background:#c6c6c6"></div><div style="left:7px;top:872px;width:40px;height:1px;background:#aaa69f"></div><div style="left:48px;top:906px;width:1821px;height:1px;background:#c6c6c6"></div><div style="left:7px;top:906px;width:40px;height:1px;background:#aaa69f"></div><div style="left:47px;top:140px;width:1px;height:773px;background:#aaa69f"></div><div style="left:531px;top:159px;width:1px;height:754px;background:#c6c6c6"></div><div style="left:531px;top:141px;width:1px;height:17px;background:#aaa69f"></div><div style="left:953px;top:159px;width:1px;height:754px;background:#c6c6c6"></div><div style="left:953px;top:141px;width:1px;height:17px;background:#aaa69f"></div><div style="left:1325px;top:159px;width:1px;height:754px;background:#c6c6c6"></div><div style="left:1325px;top:141px;width:1px;height:17px;background:#aaa69f"></div><div style="left:1517px;top:159px;width:1px;height:754px;background:#c6c6c6"></div><div style="left:1517px;top:141px;width:1px;height:17px;background:#aaa69f"></div><div style="left:1611px;top:159px;width:1px;height:754px;background:#c6c6c6"></div><div style="left:1611px;top:141px;width:1px;height:17px;background:#aaa69f"></div><div style="left:1701px;top:159px;width:1px;height:754px;background:#c6c6c6"></div><div style="left:1701px;top:141px;width:1px;height:17px;background:#aaa69f"></div><div style="left:1866px;top:159px;width:1px;height:754px;background:#c6c6c6"></div><div style="left:1866px;top:141px;width:1px;height:17px;background:#aaa69f"></div><div style="left:48px;top:141px;width:484px;height:18px;background:linear-gradient(#f4a887 0,#f4a887 8px,#f07746 8px)"></div><div style="left:7px;top:159px;width:41px;height:33px;background:linear-gradient(90deg,#f4a887 0,#f4a887 20px,#f07746 20px)"></div><div style="left:7px;top:192px;width:41px;height:1px;background:#d8683a"></div><div class="t" style="left:47.50px;width:484.0px;text-align:center;top:143.00px;font-size:13px;line-height:13px;color:#fff;white-space:pre;font-weight:bold;">A</div><div class="t" style="left:531.50px;width:422.0px;text-align:center;top:143.00px;font-size:13px;line-height:13px;color:#3c3c3c;white-space:pre;">B</div><div class="t" style="left:953.50px;width:372.0px;text-align:center;top:143.00px;font-size:13px;line-height:13px;color:#3c3c3c;white-space:pre;">C</div><div class="t" style="left:1325.50px;width:192.0px;text-align:center;top:143.00px;font-size:13px;line-height:13px;color:#3c3c3c;white-space:pre;">D</div><div class="t" style="left:1517.50px;width:94.0px;text-align:center;top:143.00px;font-size:13px;line-height:13px;color:#3c3c3c;white-space:pre;">E</div><div class="t" style="left:1611.50px;width:90.0px;text-align:center;top:143.00px;font-size:13px;line-height:13px;color:#3c3c3c;white-space:pre;">F</div><div class="t" style="left:1701.50px;width:165.0px;text-align:center;top:143.00px;font-size:13px;line-height:13px;color:#3c3c3c;white-space:pre;">G</div><div class="t" style="left:7.00px;width:40px;text-align:center;top:168.50px;font-size:13px;line-height:13px;color:#fff;white-space:pre;font-weight:bold;">1</div><div class="t" style="left:7.00px;width:40px;text-align:center;top:202.50px;font-size:13px;line-height:13px;color:#3c3c3c;white-space:pre;">2</div><div class="t" style="left:7.00px;width:40px;text-align:center;top:236.50px;font-size:13px;line-height:13px;color:#3c3c3c;white-space:pre;">3</div><div class="t" style="left:7.00px;width:40px;text-align:center;top:270.50px;font-size:13px;line-height:13px;color:#3c3c3c;white-space:pre;">4</div><div class="t" style="left:7.00px;width:40px;text-align:center;top:304.50px;font-size:13px;line-height:13px;color:#3c3c3c;white-space:pre;">5</div><div class="t" style="left:7.00px;width:40px;text-align:center;top:338.50px;font-size:13px;line-height:13px;color:#3c3c3c;white-space:pre;">6</div><div class="t" style="left:7.00px;width:40px;text-align:center;top:372.50px;font-size:13px;line-height:13px;color:#3c3c3c;white-space:pre;">7</div><div class="t" style="left:7.00px;width:40px;text-align:center;top:406.50px;font-size:13px;line-height:13px;color:#3c3c3c;white-space:pre;">8</div><div class="t" style="left:7.00px;width:40px;text-align:center;top:440.50px;font-size:13px;line-height:13px;color:#3c3c3c;white-space:pre;">9</div><div class="t" style="left:7.00px;width:40px;text-align:center;top:474.50px;font-size:13px;line-height:13px;color:#3c3c3c;white-space:pre;">10</div><div class="t" style="left:7.00px;width:40px;text-align:center;top:508.50px;font-size:13px;line-height:13px;color:#3c3c3c;white-space:pre;">11</div><div class="t" style="left:7.00px;width:40px;text-align:center;top:542.50px;font-size:13px;line-height:13px;color:#3c3c3c;white-space:pre;">12</div><div class="t" style="left:7.00px;width:40px;text-align:center;top:576.50px;font-size:13px;line-height:13px;color:#3c3c3c;white-space:pre;">13</div><div class="t" style="left:7.00px;width:40px;text-align:center;top:610.50px;font-size:13px;line-height:13px;color:#3c3c3c;white-space:pre;">14</div><div class="t" style="left:7.00px;width:40px;text-align:center;top:644.50px;font-size:13px;line-height:13px;color:#3c3c3c;white-space:pre;">15</div><div class="t" style="left:7.00px;width:40px;text-align:center;top:678.50px;font-size:13px;line-height:13px;color:#3c3c3c;white-space:pre;">16</div><div class="t" style="left:7.00px;width:40px;text-align:center;top:712.50px;font-size:13px;line-height:13px;color:#3c3c3c;white-space:pre;">17</div><div class="t" style="left:7.00px;width:40px;text-align:center;top:746.50px;font-size:13px;line-height:13px;color:#3c3c3c;white-space:pre;">18</div><div class="t" style="left:7.00px;width:40px;text-align:center;top:780.50px;font-size:13px;line-height:13px;color:#3c3c3c;white-space:pre;">19</div><div class="t" style="left:7.00px;width:40px;text-align:center;top:814.50px;font-size:13px;line-height:13px;color:#3c3c3c;white-space:pre;">20</div><div class="t" style="left:7.00px;width:40px;text-align:center;top:848.50px;font-size:13px;line-height:13px;color:#3c3c3c;white-space:pre;">21</div><div class="t" style="left:7.00px;width:40px;text-align:center;top:882.50px;font-size:13px;line-height:13px;color:#3c3c3c;white-space:pre;">22</div><div class="t" style="left:49.70px;top:163.23px;font-size:26.9px;line-height:26.9px;color:#000;white-space:pre;transform:scaleX(1.0067);transform-origin:left top">Libelle operation</div><div class="t" style="left:533.70px;top:163.23px;font-size:26.9px;line-height:26.9px;color:#000;white-space:pre;transform:scaleX(1.0111);transform-origin:left top">Libelle simplifie</div><div class="t" style="left:955.70px;top:163.23px;font-size:26.9px;line-height:26.9px;color:#000;white-space:pre;transform:scaleX(1.0088);transform-origin:left top">Informations complementaires</div><div class="t" style="left:1327.70px;top:163.23px;font-size:26.9px;line-height:26.9px;color:#000;white-space:pre;transform:scaleX(1.0094);transform-origin:left top">Type operation</div><div class="t" style="left:1519.70px;top:163.23px;font-size:26.9px;line-height:26.9px;color:#000;white-space:pre;transform:scaleX(0.9857);transform-origin:left top">Debit</div><div class="t" style="left:1613.70px;top:163.23px;font-size:26.9px;line-height:26.9px;color:#000;white-space:pre;transform:scaleX(0.9895);transform-origin:left top">Credit</div><div class="t" style="left:49.70px;top:197.23px;font-size:26.9px;line-height:26.9px;color:#000;white-space:pre;transform:scaleX(1.0020);transform-origin:left top">PRV REMUNERATION FranceBaguette</div><div class="t" style="left:533.70px;top:197.23px;font-size:26.9px;line-height:26.9px;color:#000;white-space:pre;transform:scaleX(1.0008);transform-origin:left top">REMUNERATION FranceBaguette</div><div class="t" style="left:955.70px;top:197.23px;font-size:26.9px;line-height:26.9px;color:#000;white-space:pre;">-</div><div class="t" style="left:1327.70px;top:197.23px;font-size:26.9px;line-height:26.9px;color:#000;white-space:pre;transform:scaleX(0.9955);transform-origin:left top">Prélèvement</div><div class="t" style="left:1519.70px;top:197.23px;font-size:26.9px;line-height:26.9px;color:#000;white-space:pre;">0.00</div><div class="t" style="left:1613.70px;top:197.23px;font-size:26.9px;line-height:26.9px;color:#000;white-space:pre;">20.90</div><div class="t" style="left:49.70px;top:231.23px;font-size:26.9px;line-height:26.9px;color:#000;white-space:pre;transform:scaleX(0.9982);transform-origin:left top">PRV REMUNERATION ÉpiceDDFIP</div><div class="t" style="left:533.70px;top:231.23px;font-size:26.9px;line-height:26.9px;color:#000;white-space:pre;transform:scaleX(0.9957);transform-origin:left top">REMUNERATION ÉpiceDDFIP</div><div class="t" style="left:955.70px;top:231.23px;font-size:26.9px;line-height:26.9px;color:#000;white-space:pre;">-</div><div class="t" style="left:1327.70px;top:231.23px;font-size:26.9px;line-height:26.9px;color:#000;white-space:pre;transform:scaleX(0.9955);transform-origin:left top">Prélèvement</div><div class="t" style="left:1519.70px;top:231.23px;font-size:26.9px;line-height:26.9px;color:#000;white-space:pre;">0.00</div><div class="t" style="left:1613.70px;top:231.23px;font-size:26.9px;line-height:26.9px;color:#000;white-space:pre;">47.32</div><div class="t" style="left:49.70px;top:265.23px;font-size:26.9px;line-height:26.9px;color:#000;white-space:pre;transform:scaleX(1.0006);transform-origin:left top">PRV REMUNERATION UnivPharmacie</div><div class="t" style="left:533.70px;top:265.23px;font-size:26.9px;line-height:26.9px;color:#000;white-space:pre;transform:scaleX(0.9976);transform-origin:left top">REMUNERATION UnivPharmacie</div><div class="t" style="left:955.70px;top:265.23px;font-size:26.9px;line-height:26.9px;color:#000;white-space:pre;">-</div><div class="t" style="left:1327.70px;top:265.23px;font-size:26.9px;line-height:26.9px;color:#000;white-space:pre;transform:scaleX(0.9955);transform-origin:left top">Prélèvement</div><div class="t" style="left:1519.70px;top:265.23px;font-size:26.9px;line-height:26.9px;color:#000;white-space:pre;">0.00</div><div class="t" style="left:1613.70px;top:265.23px;font-size:26.9px;line-height:26.9px;color:#000;white-space:pre;">35.99</div><div class="t" style="left:49.70px;top:299.23px;font-size:26.9px;line-height:26.9px;color:#000;white-space:pre;transform:scaleX(1.0026);transform-origin:left top">VIR REMUNERATION BaguetteFrance</div><div class="t" style="left:533.70px;top:299.23px;font-size:26.9px;line-height:26.9px;color:#000;white-space:pre;transform:scaleX(1.0008);transform-origin:left top">REMUNERATION BaguetteFrance</div><div class="t" style="left:955.70px;top:299.23px;font-size:26.9px;line-height:26.9px;color:#000;white-space:pre;">-</div><div class="t" style="left:1327.70px;top:299.23px;font-size:26.9px;line-height:26.9px;color:#000;white-space:pre;transform:scaleX(0.9912);transform-origin:left top">Virement</div><div class="t" style="left:1519.70px;top:299.23px;font-size:26.9px;line-height:26.9px;color:#000;white-space:pre;">0.00</div><div class="t" style="left:1613.70px;top:299.23px;font-size:26.9px;line-height:26.9px;color:#000;white-space:pre;">11.50</div><div class="t" style="left:49.70px;top:333.23px;font-size:26.9px;line-height:26.9px;color:#000;white-space:pre;transform:scaleX(0.9982);transform-origin:left top">PRV REMUNERATION ÉpiceDDFIP</div><div class="t" style="left:533.70px;top:333.23px;font-size:26.9px;line-height:26.9px;color:#000;white-space:pre;transform:scaleX(0.9957);transform-origin:left top">REMUNERATION ÉpiceDDFIP</div><div class="t" style="left:955.70px;top:333.23px;font-size:26.9px;line-height:26.9px;color:#000;white-space:pre;">-</div><div class="t" style="left:1327.70px;top:333.23px;font-size:26.9px;line-height:26.9px;color:#000;white-space:pre;transform:scaleX(0.9955);transform-origin:left top">Prélèvement</div><div class="t" style="left:1519.70px;top:333.23px;font-size:26.9px;line-height:26.9px;color:#000;white-space:pre;">0.00</div><div class="t" style="left:1613.70px;top:333.23px;font-size:26.9px;line-height:26.9px;color:#000;white-space:pre;">49.56</div><div class="t" style="left:49.70px;top:367.23px;font-size:26.9px;line-height:26.9px;color:#000;white-space:pre;transform:scaleX(0.9989);transform-origin:left top">CB FACT DDFIPPharmacie</div><div class="t" style="left:533.70px;top:367.23px;font-size:26.9px;line-height:26.9px;color:#000;white-space:pre;transform:scaleX(0.9991);transform-origin:left top">FACT DDFIPPharmacie</div><div class="t" style="left:955.70px;top:367.23px;font-size:26.9px;line-height:26.9px;color:#000;white-space:pre;">-</div><div class="t" style="left:1327.70px;top:367.23px;font-size:26.9px;line-height:26.9px;color:#000;white-space:pre;transform:scaleX(1.0082);transform-origin:left top">Carte Bleue</div><div class="t" style="left:1519.70px;top:367.23px;font-size:26.9px;line-height:26.9px;color:#000;white-space:pre;">-5.19</div><div class="t" style="left:1613.70px;top:367.23px;font-size:26.9px;line-height:26.9px;color:#000;white-space:pre;">0.00</div><div class="t" style="left:49.70px;top:401.23px;font-size:26.9px;line-height:26.9px;color:#000;white-space:pre;transform:scaleX(0.9987);transform-origin:left top">CB REMUNERATION FranceFrance</div><div class="t" style="left:533.70px;top:401.23px;font-size:26.9px;line-height:26.9px;color:#000;white-space:pre;transform:scaleX(0.9979);transform-origin:left top">REMUNERATION FranceFrance</div><div class="t" style="left:955.70px;top:401.23px;font-size:26.9px;line-height:26.9px;color:#000;white-space:pre;">-</div><div class="t" style="left:1327.70px;top:401.23px;font-size:26.9px;line-height:26.9px;color:#000;white-space:pre;transform:scaleX(1.0082);transform-origin:left top">Carte Bleue</div><div class="t" style="left:1519.70px;top:401.23px;font-size:26.9px;line-height:26.9px;color:#000;white-space:pre;">0.00</div><div class="t" style="left:1613.70px;top:401.23px;font-size:26.9px;line-height:26.9px;color:#000;white-space:pre;">9.47</div><div class="t" style="left:49.70px;top:435.23px;font-size:26.9px;line-height:26.9px;color:#000;white-space:pre;transform:scaleX(0.9970);transform-origin:left top">PRV REMUNERATION MarchéDDFIP</div><div class="t" style="left:533.70px;top:435.23px;font-size:26.9px;line-height:26.9px;color:#000;white-space:pre;transform:scaleX(0.9954);transform-origin:left top">REMUNERATION MarchéDDFIP</div><div class="t" style="left:955.70px;top:435.23px;font-size:26.9px;line-height:26.9px;color:#000;white-space:pre;">-</div><div class="t" style="left:1327.70px;top:435.23px;font-size:26.9px;line-height:26.9px;color:#000;white-space:pre;transform:scaleX(0.9955);transform-origin:left top">Prélèvement</div><div class="t" style="left:1519.70px;top:435.23px;font-size:26.9px;line-height:26.9px;color:#000;white-space:pre;">0.00</div><div class="t" style="left:1613.70px;top:435.23px;font-size:26.9px;line-height:26.9px;color:#000;white-space:pre;">17.14</div><div class="t" style="left:49.70px;top:469.23px;font-size:26.9px;line-height:26.9px;color:#000;white-space:pre;transform:scaleX(0.9927);transform-origin:left top">CB REMUNERATION DDFIPDDFIP</div><div class="t" style="left:533.70px;top:469.23px;font-size:26.9px;line-height:26.9px;color:#000;white-space:pre;transform:scaleX(0.9917);transform-origin:left top">REMUNERATION DDFIPDDFIP</div><div class="t" style="left:955.70px;top:469.23px;font-size:26.9px;line-height:26.9px;color:#000;white-space:pre;">-</div><div class="t" style="left:1327.70px;top:469.23px;font-size:26.9px;line-height:26.9px;color:#000;white-space:pre;transform:scaleX(1.0082);transform-origin:left top">Carte Bleue</div><div class="t" style="left:1519.70px;top:469.23px;font-size:26.9px;line-height:26.9px;color:#000;white-space:pre;">0.00</div><div class="t" style="left:1613.70px;top:469.23px;font-size:26.9px;line-height:26.9px;color:#000;white-space:pre;">35.61</div><div class="t" style="left:49.70px;top:503.23px;font-size:26.9px;line-height:26.9px;color:#000;white-space:pre;transform:scaleX(0.9942);transform-origin:left top">CB REMUNERATION FranceUniv</div><div class="t" style="left:533.70px;top:503.23px;font-size:26.9px;line-height:26.9px;color:#000;white-space:pre;transform:scaleX(0.9941);transform-origin:left top">REMUNERATION FranceUniv</div><div class="t" style="left:955.70px;top:503.23px;font-size:26.9px;line-height:26.9px;color:#000;white-space:pre;">-</div><div class="t" style="left:1327.70px;top:503.23px;font-size:26.9px;line-height:26.9px;color:#000;white-space:pre;transform:scaleX(1.0082);transform-origin:left top">Carte Bleue</div><div class="t" style="left:1519.70px;top:503.23px;font-size:26.9px;line-height:26.9px;color:#000;white-space:pre;">0.00</div><div class="t" style="left:1613.70px;top:503.23px;font-size:26.9px;line-height:26.9px;color:#000;white-space:pre;">34.54</div><div class="t" style="left:49.70px;top:537.23px;font-size:26.9px;line-height:26.9px;color:#000;white-space:pre;transform:scaleX(1.0060);transform-origin:left top">PRV FACT PharmacieÉpice</div><div class="t" style="left:533.70px;top:537.23px;font-size:26.9px;line-height:26.9px;color:#000;white-space:pre;transform:scaleX(1.0050);transform-origin:left top">FACT PharmacieÉpice</div><div class="t" style="left:955.70px;top:537.23px;font-size:26.9px;line-height:26.9px;color:#000;white-space:pre;">-</div><div class="t" style="left:1327.70px;top:537.23px;font-size:26.9px;line-height:26.9px;color:#000;white-space:pre;transform:scaleX(0.9955);transform-origin:left top">Prélèvement</div><div class="t" style="left:1519.70px;top:537.23px;font-size:26.9px;line-height:26.9px;color:#000;white-space:pre;">-3.23</div><div class="t" style="left:1613.70px;top:537.23px;font-size:26.9px;line-height:26.9px;color:#000;white-space:pre;">0.00</div><div class="t" style="left:49.70px;top:571.23px;font-size:26.9px;line-height:26.9px;color:#000;white-space:pre;transform:scaleX(1.0029);transform-origin:left top">VIR FACT BaguetteDDFIP</div><div class="t" style="left:533.70px;top:571.23px;font-size:26.9px;line-height:26.9px;color:#000;white-space:pre;transform:scaleX(1.0016);transform-origin:left top">FACT BaguetteDDFIP</div><div class="t" style="left:955.70px;top:571.23px;font-size:26.9px;line-height:26.9px;color:#000;white-space:pre;">-</div><div class="t" style="left:1327.70px;top:571.23px;font-size:26.9px;line-height:26.9px;color:#000;white-space:pre;transform:scaleX(0.9912);transform-origin:left top">Virement</div><div class="t" style="left:1519.70px;top:571.23px;font-size:26.9px;line-height:26.9px;color:#000;white-space:pre;">-27.88</div><div class="t" style="left:1613.70px;top:571.23px;font-size:26.9px;line-height:26.9px;color:#000;white-space:pre;">0.00</div><div class="t" style="left:49.70px;top:605.23px;font-size:26.9px;line-height:26.9px;color:#000;white-space:pre;transform:scaleX(1.0008);transform-origin:left top">PRV REMUNERATION UnivÉpice</div><div class="t" style="left:533.70px;top:605.23px;font-size:26.9px;line-height:26.9px;color:#000;white-space:pre;transform:scaleX(0.9983);transform-origin:left top">REMUNERATION UnivÉpice</div><div class="t" style="left:955.70px;top:605.23px;font-size:26.9px;line-height:26.9px;color:#000;white-space:pre;">-</div><div class="t" style="left:1327.70px;top:605.23px;font-size:26.9px;line-height:26.9px;color:#000;white-space:pre;transform:scaleX(0.9955);transform-origin:left top">Prélèvement</div><div class="t" style="left:1519.70px;top:605.23px;font-size:26.9px;line-height:26.9px;color:#000;white-space:pre;">0.00</div><div class="t" style="left:1613.70px;top:605.23px;font-size:26.9px;line-height:26.9px;color:#000;white-space:pre;">41.75</div><div class="t" style="left:49.70px;top:639.23px;font-size:26.9px;line-height:26.9px;color:#000;white-space:pre;transform:scaleX(0.9965);transform-origin:left top">VIR FACT DDFIPDDFIP</div><div class="t" style="left:533.70px;top:639.23px;font-size:26.9px;line-height:26.9px;color:#000;white-space:pre;transform:scaleX(0.9937);transform-origin:left top">FACT DDFIPDDFIP</div><div class="t" style="left:955.70px;top:639.23px;font-size:26.9px;line-height:26.9px;color:#000;white-space:pre;">-</div><div class="t" style="left:1327.70px;top:639.23px;font-size:26.9px;line-height:26.9px;color:#000;white-space:pre;transform:scaleX(0.9912);transform-origin:left top">Virement</div><div class="t" style="left:1519.70px;top:639.23px;font-size:26.9px;line-height:26.9px;color:#000;white-space:pre;">-24.40</div><div class="t" style="left:1613.70px;top:639.23px;font-size:26.9px;line-height:26.9px;color:#000;white-space:pre;">0.00</div><div class="t" style="left:49.70px;top:673.23px;font-size:26.9px;line-height:26.9px;color:#000;white-space:pre;transform:scaleX(1.0054);transform-origin:left top">CB FACT ÉpiceMarché</div><div class="t" style="left:533.70px;top:673.23px;font-size:26.9px;line-height:26.9px;color:#000;white-space:pre;transform:scaleX(1.0057);transform-origin:left top">FACT ÉpiceMarché</div><div class="t" style="left:955.70px;top:673.23px;font-size:26.9px;line-height:26.9px;color:#000;white-space:pre;">-</div><div class="t" style="left:1327.70px;top:673.23px;font-size:26.9px;line-height:26.9px;color:#000;white-space:pre;transform:scaleX(1.0082);transform-origin:left top">Carte Bleue</div><div class="t" style="left:1519.70px;top:673.23px;font-size:26.9px;line-height:26.9px;color:#000;white-space:pre;">-0.26</div><div class="t" style="left:1613.70px;top:673.23px;font-size:26.9px;line-height:26.9px;color:#000;white-space:pre;">0.00</div><div style="left:48px;top:159px;width:484px;height:1px;background:#000"></div><div style="left:48px;top:191px;width:484px;height:2px;background:#000"></div><div style="left:48px;top:159px;width:1px;height:34px;background:#000"></div><div style="left:530px;top:159px;width:2px;height:34px;background:#000"></div><div style="left:529px;top:190px;width:5px;height:5px;background:#000"></div><div class="t" style="left:26.57px;top:80.05px;font-size:14px;line-height:14px;color:#3c3c3c;white-space:pre;transform:scaleX(1.0339);transform-origin:left top;">Liberation San</div><div class="t" style="left:170.04px;top:80.25px;font-size:14px;line-height:14px;color:#3c3c3c;white-space:pre;transform:scaleX(0.9604);transform-origin:left top;">10</div><div class="t" style="left:15.00px;top:116.05px;font-size:14px;line-height:14px;color:#3c3c3c;white-space:pre;transform:scaleX(0.9228);transform-origin:left top;">A1</div><div class="t" style="left:256.53px;top:116.25px;font-size:14px;line-height:14px;color:#3c3c3c;white-space:pre;transform:scaleX(1.0658);transform-origin:left top;">Libelle operation</div><div style="left:7px;top:913px;width:1862px;height:7px;background:#f2f1f0"></div><div style="left:8px;top:913px;width:812px;height:7px;background:#f08c64"></div><div style="left:1864px;top:913px;width:5px;height:7px;background:#a8a6a2"></div><div style="left:1866px;top:914px;width:1px;height:5px;background:#111"></div><div style="left:115px;top:920px;width:134px;height:18px;background:#fff;border:1px solid #8e8a84;border-top:none"></div><div class="t" style="left:127.40px;top:921.00px;font-size:13px;line-height:13px;color:#3c3c3c;white-space:pre;transform:scaleX(1.1068);transform-origin:left top;font-weight:bold;">01-sheet-simple</div><div class="t" style="left:59.80px;top:950.05px;font-size:14px;line-height:14px;color:#8a8a8a;white-space:pre;transform:scaleX(0.9981);transform-origin:left top;">Find</div><div class="t" style="left:370.58px;top:948.95px;font-size:14px;line-height:14px;color:#a8a8a8;white-space:pre;transform:scaleX(0.9238);transform-origin:left top;">Find All</div><div class="t" style="left:445.55px;top:948.95px;font-size:14px;line-height:14px;color:#3c3c3c;white-space:pre;transform:scaleX(1.0498);transform-origin:left top;">Formatted Display</div><div class="t" style="left:592.61px;top:948.95px;font-size:14px;line-height:14px;color:#3c3c3c;white-space:pre;transform:scaleX(0.9945);transform-origin:left top;">Match Case</div><div style="left:7px;top:1016px;width:1915px;height:1px;background:#c4c2be"></div><div class="t" style="left:17.10px;top:1020.90px;font-size:13px;line-height:13px;color:#4a4a4a;white-space:pre;transform:scaleX(1.0389);transform-origin:left top;">Sheet 1 of 1</div><div class="t" style="left:622.87px;top:1020.80px;font-size:13px;line-height:13px;color:#4a4a4a;white-space:pre;transform:scaleX(1.0276);transform-origin:left top;">Default</div><div class="t" style="left:1013.58px;top:1020.80px;font-size:13px;line-height:13px;color:#4a4a4a;white-space:pre;transform:scaleX(1.0189);transform-origin:left top;">French (France)</div><div class="t" style="left:1502.10px;top:1020.80px;font-size:13px;line-height:13px;color:#4a4a4a;white-space:pre;transform:scaleX(1.0416);transform-origin:left top;">Average: ; Sum: 0</div><div class="t" style="left:1878.60px;top:1021.00px;font-size:13px;line-height:13px;color:#4a4a4a;white-space:pre;transform:scaleX(1.0122);transform-origin:left top;">200%</div><div style="left:1869px;top:140px;width:7px;height:773px;background:#f2f1f0"></div><div style="left:1869px;top:140px;width:7px;height:7px;background:#b8b6b2"></div><div style="left:1870px;top:142.5px;width:6px;height:2px;background:#111"></div><div style="left:1869px;top:148px;width:7px;height:365px;background:#f08c64"></div><div style="left:1876px;top:107px;width:1px;height:830px;background:#a6a4a0"></div><div style="left:1877px;top:108px;width:1px;height:828px;background:#fff"></div><div style="left:1882px;top:107px;width:1px;height:830px;background:#a6a4a0"></div><div style="left:1876px;top:107px;width:46px;height:1px;background:#a6a4a0"></div><div style="left:1877px;top:108px;width:45px;height:1px;background:#fff"></div><div style="left:1876px;top:936px;width:46px;height:1px;background:#a6a4a0"></div><div style="left:1877px;top:486px;width:5px;height:73px;background:#9c9893"></div><svg style="left:1877px;top:516px" width="5" height="12"><path d="M0.5 1.5 L4.5 6 L0.5 10.5 Z" fill="#f4f4f4"/></svg>
</body></html>
